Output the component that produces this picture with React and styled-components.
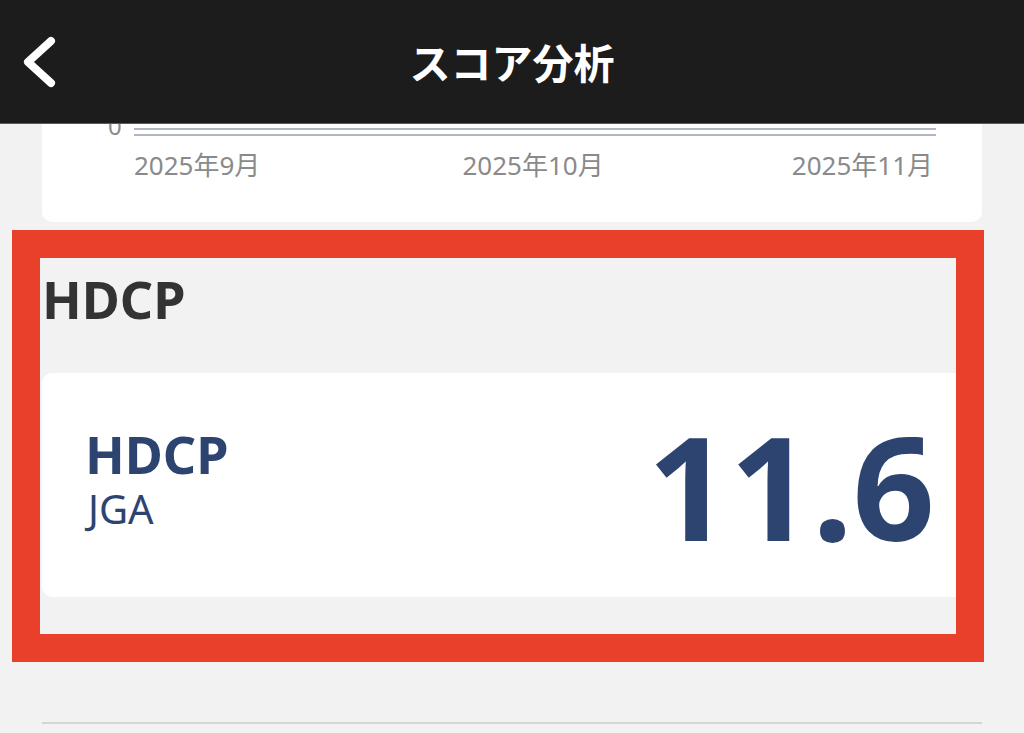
import styled, { createGlobalStyle } from 'styled-components';

const GlobalStyle = createGlobalStyle`
  html, body {
    margin: 0;
    padding: 0;
    background-color: #f2f2f2;
  }
  body {
    font-family: "Noto Sans", "Noto Sans CJK JP", sans-serif;
  }
`;

const Page = styled('div')`
  position: relative;
  height: 733px;
  overflow: hidden;
  background-color: #f2f2f2;
`;

const Header = styled('header')`
  position: relative;
  z-index: 2;
  display: grid;
  grid-template-columns: 124px 1fr 124px;
  align-items: center;
  height: 124px;
  background-color: #1c1c1c;
  border-bottom: 1px solid #5a5a5a;
  box-sizing: border-box;
`;

const BackButton = styled('button')`
  display: flex;
  align-items: center;
  width: 60px;
  height: 60px;
  margin-left: 20px;
  padding: 0;
  border: 0;
  background: none;
`;

const Title = styled('h1')`
  margin: 0;
  text-align: center;
  color: #fff;
  font-family: "Noto Sans CJK JP", sans-serif;
  font-size: 41px;
  font-weight: 700;
  line-height: 1;
`;

const Main = styled('main')`
  display: flex;
  flex-direction: column;
  padding: 0 42px;
`;

const ChartCard = styled('section')`
  margin-top: -14px;
  height: 112px;
  padding: 0 46px 0 66px;
  background-color: #fff;
  border-radius: 0 0 10px 10px;
  box-sizing: border-box;
`;

const PlotRow = styled('div')`
  display: flex;
`;

const ZeroLabel = styled('span')`
  width: 26px;
  margin-top: 4px;
  color: #8a8a8a;
  font-size: 24px;
  line-height: 24px;
`;

const Plot = styled('div')`
  flex: 1;
  height: 4px;
  margin-top: 18px;
  border-top: 2px solid #b2b6c0;
  border-bottom: 2px solid #b2b6c0;
`;

const AxisLabels = styled('div')`
  display: flex;
  justify-content: space-between;
  margin-top: 11px;
  padding: 0 3px 0 26px;
  color: #8a8a8a;
  font-size: 26px;
  line-height: 32px;

  & > span:nth-child(2) {
    padding-left: 14px;
  }
`;

const SectionTitle = styled('h2')`
  margin: 46px 0 0;
  color: #333;
  font-size: 52px;
  font-weight: 700;
  line-height: 62px;
`;

const StatCard = styled('div')`
  display: flex;
  align-items: center;
  justify-content: space-between;
  height: 224px;
  margin-top: 43px;
  padding: 0 47px 0 43px;
  background-color: #fff;
  border-radius: 10px;
  box-sizing: border-box;
`;

const StatLabel = styled('div')`
  display: flex;
  flex-direction: column;
  gap: 10px;
  padding-bottom: 12px;
  color: #2d4470;
`;

const StatName = styled('span')`
  font-size: 52px;
  font-weight: 700;
  line-height: 50px;
`;

const StatSource = styled('span')`
  padding-left: 3px;
  font-size: 40px;
  font-weight: 400;
  line-height: 40px;
`;

const StatValue = styled('span')`
  color: #2d4470;
  font-size: 144px;
  font-weight: 700;
  line-height: 146px;
`;

const Divider = styled('hr')`
  height: 2px;
  margin: 125px 0 0;
  border: 0;
  background-color: #d6d6d6;
`;

const Highlight = styled('div')`
  position: absolute;
  left: 12px;
  top: 230px;
  width: 972px;
  height: 432px;
  border: 28px solid #e8402a;
  box-sizing: border-box;
  pointer-events: none;
`;

const ChevronLeft = () => (
  <svg width="40" height="60" viewBox="0 0 40 60" fill="none">
    <polyline
      points="31,9 8,30 31,51"
      stroke="#fff"
      strokeWidth="8"
      strokeLinecap="round"
      strokeLinejoin="round"
    />
  </svg>
);

const months = ['2025年9月', '2025年10月', '2025年11月'];

export default function App() {
  return (
    <Page>
      <GlobalStyle />
      <Header>
        <BackButton aria-label="戻る">
          <ChevronLeft />
        </BackButton>
        <Title>スコア分析</Title>
        <span />
      </Header>
      <Main>
        <ChartCard>
          <PlotRow>
            <ZeroLabel>0</ZeroLabel>
            <Plot />
          </PlotRow>
          <AxisLabels>
            {months.map((m) => (
              <span key={m}>{m}</span>
            ))}
          </AxisLabels>
        </ChartCard>
        <SectionTitle>HDCP</SectionTitle>
        <StatCard>
          <StatLabel>
            <StatName>HDCP</StatName>
            <StatSource>JGA</StatSource>
          </StatLabel>
          <StatValue>11.6</StatValue>
        </StatCard>
        <Divider />
      </Main>
      <Highlight />
    </Page>
  );
}
